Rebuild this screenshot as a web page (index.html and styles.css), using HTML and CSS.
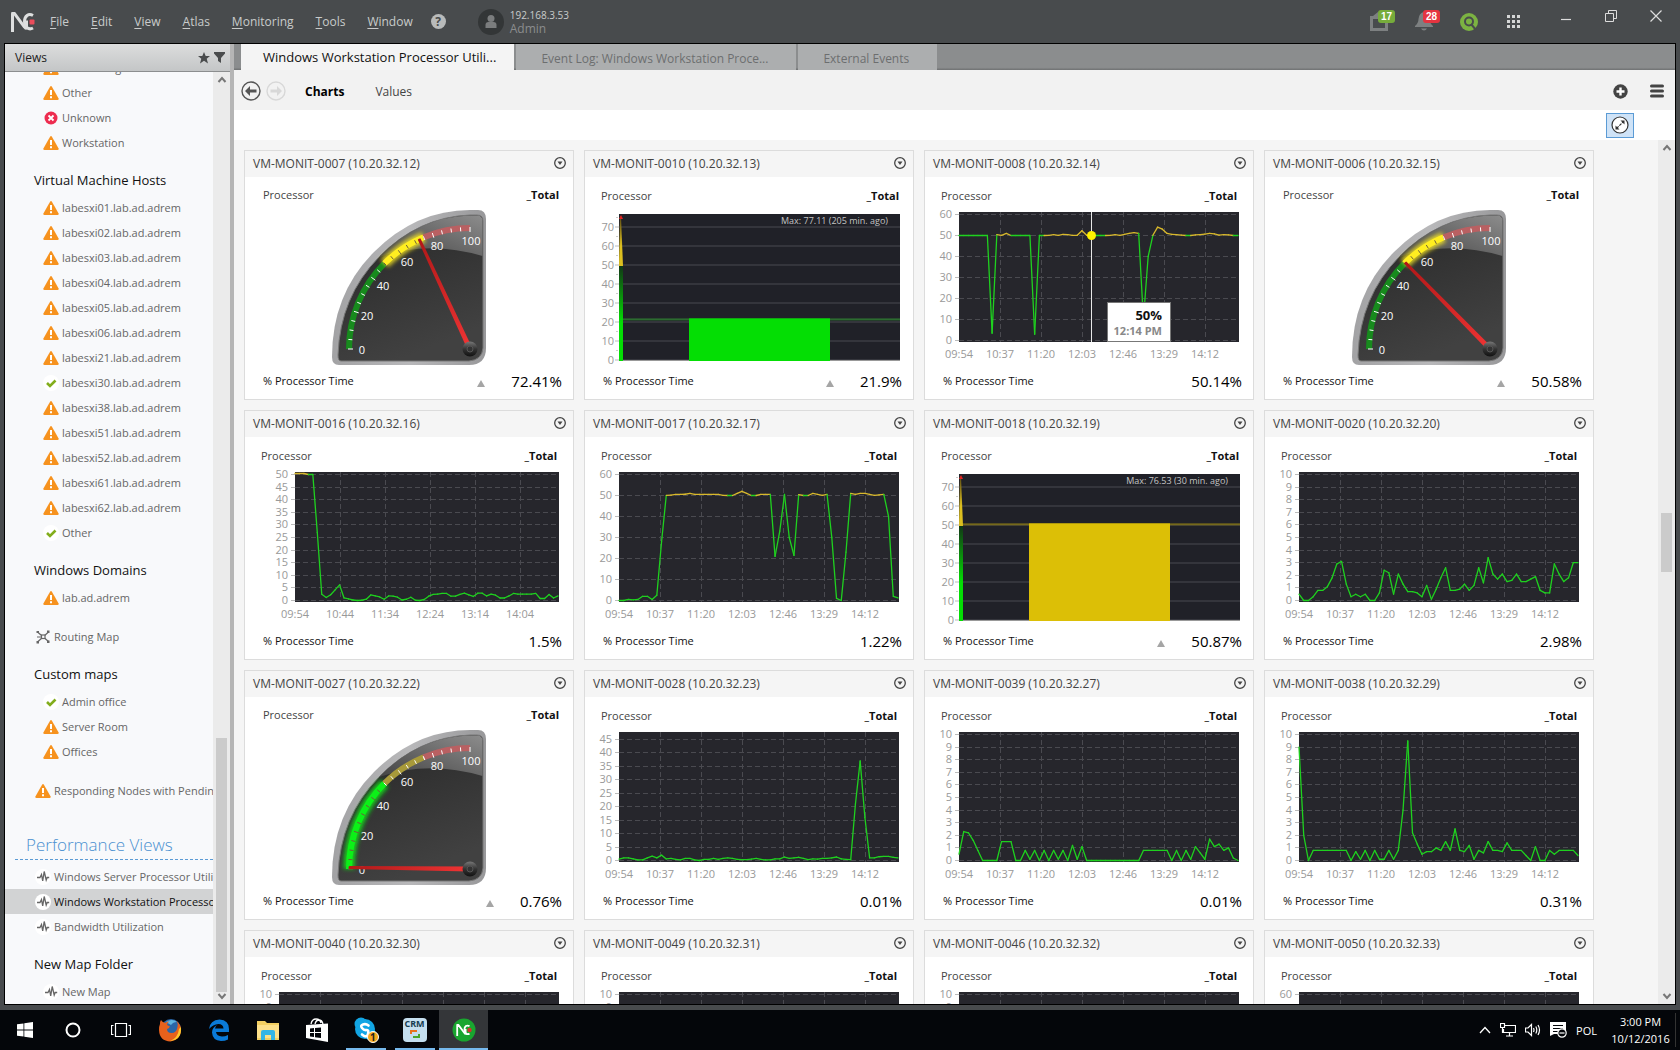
FILE: index.html
```html
<!DOCTYPE html>
<html lang="en">

<head>
    <meta name="viewport" content="width=device-width, initial-scale=1">
    <meta charset="utf-8">
    <title>Windows Workstation Processor Utilization</title>
    <link rel="stylesheet" href="styles.css">
</head>

<body>

    <!-- shared icons -->
    <svg class="defs" width="0" height="0" aria-hidden="true">
        <symbol id="i-warn" viewBox="0 0 16 16">
            <path d="M7.2 1.6Q8 .4 8.800 1.600L15.600 13.400Q16 15 14.500 15H1.500Q0 15 .4 13.400Z" fill="#f6921e"/>
            <path d="M7 5h2v5H7zM7 11.200h2v2H7z" fill="#fff"/>
        </symbol>
        <symbol id="i-error" viewBox="0 0 16 16">
            <circle cx="8" cy="8" r="6.500" fill="#ed2c4f"/>
            <path d="M5.500 5.500l5 5M10.500 5.500l-5 5" stroke="#fff" stroke-width="1.800"/>
        </symbol>
        <symbol id="i-ok" viewBox="0 0 16 16">
            <circle cx="8" cy="8" r="8" fill="#fff"/>
            <path d="M4 8l3 3 5.500-5.500" fill="none" stroke="#82ad1c" stroke-width="2.600"/>
        </symbol>
        <symbol id="i-pulse" viewBox="0 0 16 16">
            <circle cx="8" cy="8" r="8" fill="#fff"/>
            <path d="M2 8.500h3l1.500-3 1.200 6.500 1.500-9.500 2 8.500 1-2.500h2" fill="none" stroke="#666" stroke-width="1.300"/>
        </symbol>
        <symbol id="i-route" viewBox="0 0 16 16">
            <path d="M2.500 3l11 9.500M2.500 13L13.500 3M2 8h4" stroke="#666" stroke-width="1.200"/>
            <rect x="6.500" y="6" width="3.500" height="3.500" fill="#f8f9fb" stroke="#666" stroke-width="1.200"/>
            <path d="M1.500 2h2.500v2H1.500zM12 1.500h2.500v2.500H12zM1.500 12h2.500v2.500H1.500zM12 11.500h2.500v2.500H12z" fill="#666"/>
        </symbol>
        <symbol id="i-up" viewBox="0 0 10 10">
            <path d="M1.500 7L5 3l3.500 4" fill="none" stroke="#777" stroke-width="2"/>
        </symbol>
        <symbol id="i-nc" viewBox="0 0 24 20">
            <path d="M1.500 20V2Q1.500 0 3.500 1.500L13.500 15Q15.500 18 15.500 14V8.500" fill="none" stroke="currentColor" stroke-width="3"/>
            <path d="M22 3.500C17.500 1 13.500 4 13.500 9.500S17.500 18.500 22 16" fill="none" stroke="currentColor" stroke-width="3"/>
        </symbol>
    </svg>

    <header class="topbar">
        <svg class="logo" viewBox="0 0 24 20" aria-hidden="true">
            <use href="#i-nc"/>
            <rect x="18.500" y="7.500" width="5" height="5" rx="1" fill="#ea4c5b"/>
        </svg>
        <nav class="menu">
            <a href="#"><u>F</u>ile</a>
            <a href="#"><u>E</u>dit</a>
            <a href="#"><u>V</u>iew</a>
            <a href="#"><u>A</u>tlas</a>
            <a href="#"><u>M</u>onitoring</a>
            <a href="#"><u>T</u>ools</a>
            <a href="#"><u>W</u>indow</a>
        </nav>
        <button class="help" aria-label="Help">?</button>
        <div class="user">
            <svg width="26" height="26" viewBox="0 0 26 26" aria-hidden="true">
                <circle cx="13" cy="13" r="13" fill="#333637"/>
                <circle cx="13" cy="9.500" r="3.500" fill="#7b7d7e"/>
                <path d="M7.500 19v-3q0-3 3-3h5q3 0 3 3v3z" fill="#7b7d7e"/>
            </svg>
            <div class="user-text">
                <span>192.168.3.53</span>
                <span class="role">Admin</span>
            </div>
        </div>
        <div class="status">
            <button class="status-btn" aria-label="Tasks">
                <svg width="18" height="19" viewBox="0 0 18 19" aria-hidden="true">
                    <path d="M1.500 5.500h15v12h-15z" fill="none" stroke="#7d8081" stroke-width="3"/>
                    <path d="M3 4l5-4v4z" fill="#7d8081"/>
                </svg>
                <span class="badge green">17</span>
            </button>
            <button class="status-btn" aria-label="Alerts">
                <svg width="18" height="19" viewBox="0 0 18 19" aria-hidden="true">
                    <path d="M9 0q5 1 5.500 7 0 4 3.500 7v1H0v-1q3.500-3 3.500-7Q4 1 9 0zM6 16.500h6q-1 2-3 2t-3-2z" fill="#7d8081"/>
                </svg>
                <span class="badge red">28</span>
            </button>
            <button class="status-btn" aria-label="Search">
                <svg width="18" height="18" viewBox="0 0 18 18" aria-hidden="true">
                    <circle cx="9" cy="9" r="9" fill="#7cb342"/>
                    <circle cx="9" cy="8.500" r="4" fill="none" stroke="#484b4d" stroke-width="2"/>
                    <path d="M11 11l5 6" stroke="#484b4d" stroke-width="2"/>
                </svg>
            </button>
            <button class="status-btn" aria-label="Apps">
                <svg width="14" height="14" viewBox="0 0 14 14" aria-hidden="true">
                    <path d="M0 0h3v3H0zM5 0h3v3H5zM10 0h3v3h-3zM0 5h3v3H0zM5 5h3v3H5zM10 5h3v3h-3zM0 10h3v3H0zM5 10h3v3H5zM10 10h3v3h-3z" fill="#d5d6d6"/>
                </svg>
            </button>
        </div>
        <div class="window-btns">
            <button aria-label="Minimize"><svg width="12" height="12" viewBox="0 0 12 12"><path d="M1 9.500h10" stroke="#ddd" stroke-width="1.200"/></svg></button>
            <button aria-label="Restore"><svg width="12" height="12" viewBox="0 0 12 12"><path d="M.5 3.500h8v8h-8zM3.500 3V.5h8v8H9" fill="none" stroke="#ddd"/></svg></button>
            <button aria-label="Close"><svg width="12" height="12" viewBox="0 0 12 12"><path d="M.5.5l11 11M11.500.5l-11 11" stroke="#ddd" stroke-width="1.200"/></svg></button>
        </div>
    </header>

    <div class="frame">
        <aside class="sidebar">
            <div class="sidebar-head">
                <span>Views</span>
                <svg width="12" height="12" viewBox="0 0 12 12" aria-hidden="true"><path d="M6 0l1.700 4H12L8.700 6.800 10 11.500 6 8.800 2 11.500l1.300-4.700L0 4h4.300z" fill="#4a4c4d"/></svg>
                <svg width="11" height="11" viewBox="0 0 11 11" aria-hidden="true"><path d="M0 0h11v1.500L7 6v5L4 9V6L0 1.500z" fill="#4a4c4d"/></svg>
            </div>
            <div class="sidebar-body">
                <nav class="tree">
                    <a href="#" class="leaf"><svg><use href="#i-warn"/></svg>Networking</a>
                    <a href="#" class="leaf"><svg><use href="#i-warn"/></svg>Other</a>
                    <a href="#" class="leaf"><svg><use href="#i-error"/></svg>Unknown</a>
                    <a href="#" class="leaf"><svg><use href="#i-warn"/></svg>Workstation</a>
                    <h3>Virtual Machine Hosts</h3>
                    <a href="#" class="leaf"><svg><use href="#i-warn"/></svg>labesxi01.lab.ad.adrem</a>
                    <a href="#" class="leaf"><svg><use href="#i-warn"/></svg>labesxi02.lab.ad.adrem</a>
                    <a href="#" class="leaf"><svg><use href="#i-warn"/></svg>labesxi03.lab.ad.adrem</a>
                    <a href="#" class="leaf"><svg><use href="#i-warn"/></svg>labesxi04.lab.ad.adrem</a>
                    <a href="#" class="leaf"><svg><use href="#i-warn"/></svg>labesxi05.lab.ad.adrem</a>
                    <a href="#" class="leaf"><svg><use href="#i-warn"/></svg>labesxi06.lab.ad.adrem</a>
                    <a href="#" class="leaf"><svg><use href="#i-warn"/></svg>labesxi21.lab.ad.adrem</a>
                    <a href="#" class="leaf"><svg><use href="#i-ok"/></svg>labesxi30.lab.ad.adrem</a>
                    <a href="#" class="leaf"><svg><use href="#i-warn"/></svg>labesxi38.lab.ad.adrem</a>
                    <a href="#" class="leaf"><svg><use href="#i-warn"/></svg>labesxi51.lab.ad.adrem</a>
                    <a href="#" class="leaf"><svg><use href="#i-warn"/></svg>labesxi52.lab.ad.adrem</a>
                    <a href="#" class="leaf"><svg><use href="#i-warn"/></svg>labesxi61.lab.ad.adrem</a>
                    <a href="#" class="leaf"><svg><use href="#i-warn"/></svg>labesxi62.lab.ad.adrem</a>
                    <a href="#" class="leaf"><svg><use href="#i-ok"/></svg>Other</a>
                    <h3>Windows Domains</h3>
                    <a href="#" class="leaf"><svg><use href="#i-warn"/></svg>lab.ad.adrem</a>
                    <a href="#" class="spaced"><svg><use href="#i-route"/></svg>Routing Map</a>
                    <h3>Custom maps</h3>
                    <a href="#" class="leaf"><svg><use href="#i-ok"/></svg>Admin office</a>
                    <a href="#" class="leaf"><svg><use href="#i-warn"/></svg>Server Room</a>
                    <a href="#" class="leaf"><svg><use href="#i-warn"/></svg>Offices</a>
                    <a href="#" class="spaced"><svg><use href="#i-warn"/></svg>Responding Nodes with Pending</a>
                    <h2>Performance Views</h2>
                    <a href="#"><svg><use href="#i-pulse"/></svg>Windows Server Processor Utilization</a>
                    <a href="#" class="selected"><svg><use href="#i-pulse"/></svg>Windows Workstation Processor Utilization</a>
                    <a href="#"><svg><use href="#i-pulse"/></svg>Bandwidth Utilization</a>
                    <h3>New Map Folder</h3>
                    <a href="#" class="leaf"><svg><use href="#i-pulse"/></svg>New Map</a>
                </nav>
                <div class="scrollbar">
                    <svg><use href="#i-up"/></svg>
                    <div class="track"><div class="thumb tree-thumb"></div></div>
                    <svg class="down"><use href="#i-up"/></svg>
                </div>
            </div>
        </aside>

        <main class="main">
            <div class="tabs">
                <button class="tab active">Windows Workstation Processor Utili...</button>
                <button class="tab">Event Log: Windows Workstation Proce...</button>
                <button class="tab">External Events</button>
            </div>
            <div class="toolbar">
                <button aria-label="Back"><svg width="20" height="20" viewBox="0 0 20 20"><circle cx="10" cy="10" r="9" fill="none" stroke="#555" stroke-width="1.400"/><path d="M4 10l5-5v3.500h6.500v3H9V15z" fill="#555"/></svg></button>
                <button aria-label="Forward"><svg width="20" height="20" viewBox="0 0 20 20"><circle cx="10" cy="10" r="9" fill="none" stroke="#d8d8d8" stroke-width="1.400"/><path d="M16 10l-5-5v3.500H4.500v3H11V15z" fill="#d8d8d8"/></svg></button>
                <a href="#" class="current">Charts</a>
                <a href="#">Values</a>
                <div class="tools">
                    <button aria-label="Add"><svg width="15" height="15" viewBox="0 0 15 15"><circle cx="7.500" cy="7.500" r="7.200" fill="#444"/><path d="M7.500 3.500v8M3.500 7.500h8" stroke="#fff" stroke-width="2.400"/></svg></button>
                    <button aria-label="Menu"><svg width="14" height="14" viewBox="0 0 14 14"><path d="M1.500 2h11M1.500 7h11M1.500 12h11" stroke="#444" stroke-width="3" stroke-linecap="round"/></svg></button>
                </div>
            </div>
            <div class="subbar">
                <button class="toggle" aria-label="Fit"><svg width="18" height="18" viewBox="0 0 18 18"><circle cx="9" cy="9" r="8" fill="#fff" stroke="#333" stroke-width="1.200"/><path d="M5.500 12.500l7-7" stroke="#333" stroke-width="1.200" stroke-dasharray="3 1"/><path d="M9.500 4.500h4v4zM4.500 9.500v4h4z" fill="#333"/></svg></button>
            </div>
            <div class="content">
                <div class="cards" id="cards"></div>
                <div class="scrollbar">
                    <svg><use href="#i-up"/></svg>
                    <div class="track"><div class="thumb cards-thumb"></div></div>
                    <svg class="down"><use href="#i-up"/></svg>
                </div>
            </div>
        </main>
    </div>

    <footer class="taskbar">
        <button class="sys" aria-label="Start"><svg width="16" height="16" viewBox="0 0 16 16"><path d="M0 2.300L6.500 1.400v6.200H0zM7.300 1.300L16 0v7.600H7.300zM0 8.400h6.500v6.200L0 13.700zM7.300 8.400H16V16l-8.700-1.300z" fill="#fff"/></svg></button>
        <button class="sys" aria-label="Cortana"><svg width="16" height="16" viewBox="0 0 16 16"><circle cx="8" cy="8" r="6.500" fill="none" stroke="#fff" stroke-width="2"/></svg></button>
        <button class="sys" aria-label="Task view"><svg width="20" height="16" viewBox="0 0 20 16"><path d="M4.500 1.500h11v13h-11zM2.500 3.500h-2v9h2M17.500 3.500h2v9h-2" fill="none" stroke="#fff" stroke-width="1.200"/></svg></button>
        <button aria-label="Firefox"><svg width="24" height="24" viewBox="0 0 24 24"><circle cx="13" cy="11" r="10" fill="#2a66a8"/><path d="M8 4q6-4 11 0-4 0-6 3z" fill="#5fb4e0"/><path d="M3 2q1 2 4 3 2-2 4-1.500-2 1.500-2 3.500l3 1.500q-1 2-3 2.500 0 4 4.500 4 5 0 6-6 1-3-1-6 5 4 4.500 10-1 9.500-10.500 10.500Q1.500 23 1 12q0-4 1-6-.3-2 1-4z" fill="#e8611c"/><path d="M23 9q1 13-11 14 8-3 9-12z" fill="#ffc72b"/></svg></button>
        <button aria-label="Edge"><svg width="22" height="22" viewBox="0 0 22 22"><path d="M1 10Q2 1 11.500.5 21 1 21 10v3H8q.5 4 6 4.500 3 0 6-1.500v4.500q-3 1.500-7 1.500-8.500-.5-9-8.500 0-5 5-7.500-1.500 1-2 3.500h8.500q-.3-4.500-5-4.500Q5 5.500 1 10z" fill="#0a7ad8"/></svg></button>
        <button aria-label="File Explorer"><svg width="22" height="19" viewBox="0 0 22 19"><path d="M0 0h8l2 2h12v17H0z" fill="#f3cf62"/><path d="M0 4h22v13H0z" fill="#fde08a"/><path d="M4 19v-8q0-2 2-2h10q2 0 2 2v8h-4v-5H8v5z" fill="#35b5e5"/></svg></button>
        <button aria-label="Store"><svg width="22" height="24" viewBox="0 0 22 24"><path d="M0 7l22-1.500V24L0 20z" fill="#fff"/><path d="M5 6Q6 1 10 1t5 4M9 6q1-4 4-4t4 4" fill="none" stroke="#fff" stroke-width="1.300"/><path d="M4 10.500l4-.5v4H4zM9 10l6-.5V14H9zM4 15h4v4l-4-.5zM9 15h6v5l-6-.8z" fill="#04060a"/></svg></button>
        <button class="running" aria-label="Skype">
            <svg width="26" height="26" viewBox="0 0 26 26"><circle cx="8" cy="7" r="6.500" fill="#12a5e4"/><circle cx="12" cy="12" r="10" fill="#12a5e4"/><circle cx="17" cy="17" r="6" fill="#12a5e4"/><path d="M15.500 8.500Q13 6.500 10 7.500T9 11t4.500 2 1.500 4-6 .5" fill="none" stroke="#fff" stroke-width="2.600" stroke-linecap="round"/><circle cx="20" cy="20" r="5.500" fill="#f6a81c" stroke="#fff"/></svg>
            <span class="count">1</span>
        </button>
        <button class="running" aria-label="CRM">
            <span class="crm"><b>CRM</b><svg width="10" height="8" viewBox="0 0 10 8"><path d="M1 4V1h6" fill="none" stroke="#e8731f" stroke-width="2"/><path d="M9 4v3H3" fill="none" stroke="#48a72b" stroke-width="2"/></svg></span>
        </button>
        <button class="running focused" aria-label="NetCrunch">
            <svg width="24" height="24" viewBox="0 0 24 24"><circle cx="12" cy="12" r="11.500" fill="#19a52f"/><svg x="4" y="6" width="15" height="12" color="#fff"><use href="#i-nc"/></svg><circle cx="17.500" cy="12" r="2.200" fill="#d8322f"/></svg>
        </button>
        <div class="tray">
            <svg width="12" height="8" viewBox="0 0 12 8"><path d="M1 7l5-5.500L11 7" fill="none" stroke="#fff" stroke-width="1.300"/></svg>
            <svg width="16" height="14" viewBox="0 0 16 14"><path d="M5 2.500h10.500v7H3.500V6M9.500 10v3M6 13h7M.5.500h4v4h-4zM2.500 5v5" fill="none" stroke="#fff" stroke-width="1.200"/></svg>
            <svg width="16" height="14" viewBox="0 0 16 14"><path d="M.5 5v4h2.500l3.500 3.500v-11L3 5zM8.500 5q1 2 0 4M10.800 3.500q2 3.500 0 7M13 2q3 5 0 10" fill="none" stroke="#fff" stroke-width="1.200"/></svg>
            <svg width="17" height="16" viewBox="0 0 17 16"><path d="M0 0h16v12H4l-4 2z" fill="#fff"/><path d="M3 3.500h10M3 6.500h10M3 9.500h5" stroke="#04060a" stroke-width="1.200"/><circle cx="12" cy="11" r="4.200" fill="#04060a" stroke="#fff" stroke-width="1.200"/><path d="M9.500 11h5" stroke="#fff" stroke-width="1.200"/></svg>
            <span>POL</span>
            <div class="clock"><span>3:00 PM</span><span>10/12/2016</span></div>
        </div>
    </footer>

    <script src="charts.js"></script>
</body>

</html>
```
FILE: styles.css
```css
* {
    box-sizing: border-box;
}

body {
    margin: 0;
    height: 100vh;
    display: flex;
    flex-direction: column;
    overflow: hidden;
    background: #484b4d;
    font-family: "Open Sans", "Noto Sans", sans-serif;
    font-size: 11px;
    color: #444;
}

a {
    color: inherit;
    text-decoration: none;
}

button {
    font: inherit;
    color: inherit;
    background: none;
    border: none;
    padding: 0;
}

svg {
    display: block;
    flex: none;
}

.defs {
    position: absolute;
}

/* top bar */

.topbar {
    display: flex;
    align-items: center;
    height: 43px;
    flex: none;
    padding-left: 11px;
    color: #c9cbcb;
}

.logo {
    width: 24px;
    height: 20px;
    color: #dedfdf;
}

.menu {
    display: flex;
    gap: 22px;
    margin-left: 15px;
    font-size: 12px;
}

.menu u {
    text-underline-offset: 2px;
}

.help {
    width: 15px;
    height: 15px;
    margin-left: 18px;
    border-radius: 50%;
    background: #b9bbbb;
    color: #484b4d;
    font-size: 12px;
    font-weight: bold;
    line-height: 15px;
}

.user {
    display: flex;
    align-items: center;
    gap: 6px;
    margin-left: 32px;
}

.user-text {
    display: flex;
    flex-direction: column;
    font-size: 10px;
    line-height: 14px;
}

.role {
    font-size: 12px;
    color: #8b8d8e;
}

.status {
    display: flex;
    align-items: center;
    margin-left: auto;
}

.status-btn {
    position: relative;
    width: 45px;
    height: 26px;
    display: flex;
    align-items: center;
    justify-content: center;
}

.badge {
    position: absolute;
    top: 1px;
    left: 22px;
    width: 17px;
    border-radius: 3px;
    color: #fff;
    font: bold 10px/13px "Liberation Sans", sans-serif;
}

.green {
    background: #76ac3b;
}

.red {
    background: #e53440;
}

.window-btns {
    display: flex;
    gap: 33px;
    margin: 0 18px 12px 24px;
}

/* window */

.frame {
    flex: 1;
    min-height: 0;
    display: flex;
    margin: 0 4px 5px;
    border: 1px solid #000;
    background: #f5f5f5;
}

.sidebar {
    width: 229px;
    flex: none;
    display: flex;
    flex-direction: column;
    border-right: 4px solid #b5b5b5;
    background: #f8f9fb;
}

.sidebar-head {
    display: flex;
    align-items: center;
    gap: 4px;
    height: 28px;
    flex: none;
    padding: 0 5px 0 10px;
    border-bottom: 1px solid #8c8e8f;
    background: linear-gradient(#dcdddd, #c4c6c7);
    font-size: 12px;
    color: #222;
}

.sidebar-head span {
    flex: 1;
}

.sidebar-body {
    flex: 1;
    min-height: 0;
    display: flex;
}

/* the tree is scrolled down to its end */
.tree {
    flex: 1;
    min-width: 0;
    display: flex;
    flex-direction: column;
    justify-content: flex-end;
    overflow: hidden;
    color: #666;
}

.tree a {
    display: flex;
    align-items: center;
    gap: 3px;
    flex: none;
    height: 25px;
    padding-left: 30px;
    white-space: nowrap;
}

.tree a.leaf {
    padding-left: 38px;
}

.tree a.spaced {
    margin-top: 14px;
}

.tree a.selected {
    background: #d2d3d4;
    color: #111;
}

.tree svg {
    width: 16px;
    height: 16px;
}

.tree h3 {
    flex: none;
    margin: 12px 0 2px 29px;
    font-size: 13px;
    font-weight: normal;
    line-height: 26px;
    color: #111;
}

.tree h2 {
    flex: none;
    margin: 28px 0 4px 10px;
    padding-left: 11px;
    border-bottom: 1px dashed #5b9bd5;
    font-size: 17px;
    font-weight: 300;
    line-height: 28px;
    color: #4a90d0;
}

.scrollbar {
    width: 17px;
    flex: none;
    display: flex;
    flex-direction: column;
    align-items: center;
    padding: 3px 0;
    background: #ebebeb;
}

.scrollbar svg {
    width: 10px;
    height: 10px;
}

.scrollbar .down {
    transform: rotate(180deg);
}

.track {
    flex: 1;
    width: 11px;
}

.thumb {
    background: #cbcbcb;
}

.tree-thumb {
    height: 28%;
    margin-top: 653px;
}

.cards-thumb {
    height: 59px;
    margin-top: 360px;
}

/* main area */

.main {
    flex: 1;
    min-width: 0;
    display: flex;
    flex-direction: column;
}

.tabs {
    display: flex;
    gap: 2px;
    height: 26px;
    flex: none;
    padding-left: 7px;
    background: linear-gradient(#8b8d8e 90%, #6f7172);
}

.tab {
    padding: 2px 28px 0 25px;
    background: #acaeaf;
    color: #6c6e6f;
    font-size: 12px;
}

.tab.active {
    padding: 0 18px 0 22px;
    background: #f4f4f4;
    color: #111;
    font-size: 13px;
}

.toolbar {
    display: flex;
    align-items: center;
    height: 40px;
    flex: none;
    padding: 2px 11px 0 7px;
    background: #f2f2f2;
    font-size: 12px;
}

.toolbar > button {
    margin-right: 5px;
}

.toolbar > a {
    margin: 0 17px 0 14px;
}

.toolbar .current {
    color: #000;
    font-weight: bold;
}

.tools {
    display: flex;
    gap: 22px;
    margin-left: auto;
}

.subbar {
    display: flex;
    align-items: center;
    justify-content: flex-end;
    height: 30px;
    flex: none;
    padding-right: 41px;
    background: #fff;
}

.toggle {
    display: flex;
    align-items: center;
    justify-content: center;
    width: 28px;
    height: 25px;
    border: 1px solid #5b9bd5;
    background: #cfe3f7;
}

.content {
    flex: 1;
    min-height: 0;
    display: flex;
    background: #f5f5f5;
}

.cards {
    flex: 1;
    display: grid;
    grid-template-columns: repeat(auto-fill, 330px);
    grid-auto-rows: 250px;
    gap: 10px;
    padding: 10px;
    overflow: hidden;
}

.card {
    border: 1px solid #dcdcdc;
    background: #fff;
}

.card-head {
    display: flex;
    align-items: center;
    justify-content: space-between;
    height: 26px;
    padding: 0 7px 2px 8px;
    background: #f5f5f5;
}

.card-head h4 {
    margin: 0;
    font-size: 12px;
    font-weight: normal;
}

.labels {
    display: flex;
    justify-content: space-between;
    padding: 9px 16px 0;
    line-height: 20px;
}

.labels b {
    color: #111;
}

.gauge .labels {
    padding: 8px 14px 1px 18px;
}

.bars .labels {
    padding-right: 14px;
}

.card-foot {
    display: flex;
    align-items: center;
    padding: 0 11px 0 18px;
    line-height: 30px;
    color: #111;
}

.card-foot .trend {
    margin: 4px 26px 0 auto;
}

.card-foot .value {
    font-size: 15px;
    color: #000;
}

.card-foot .name + .value {
    margin-left: auto;
}

.chart text {
    font-size: 11px;
    fill: #999;
}

.chart .dial-text {
    fill: #fff;
}

.chart .max-text {
    font-size: 9px;
    fill: #c4c4c4;
}

.chart .tip-value {
    font-size: 13px;
    font-weight: bold;
    fill: #111;
}

.chart .tip-time {
    font-weight: bold;
    fill: #888;
}

/* task bar */

.taskbar {
    display: flex;
    height: 40px;
    flex: none;
    padding-left: 1px;
    background: #04060a;
    color: #fff;
}

.taskbar button {
    position: relative;
    display: flex;
    align-items: center;
    justify-content: center;
    width: 49px;
}

.taskbar .sys {
    width: 48px;
}

.running::after {
    content: "";
    position: absolute;
    bottom: 0;
    left: 5px;
    right: 4px;
    height: 2px;
    background: #76b9ed;
}

.taskbar .focused {
    background: #343639;
}

.focused::after {
    left: 0;
    right: 0;
}

.count {
    position: absolute;
    left: 29px;
    top: 20px;
    font-size: 10px;
    font-weight: bold;
    color: #222;
}

.crm {
    display: flex;
    flex-direction: column;
    align-items: center;
    width: 24px;
    height: 24px;
    border-radius: 4px;
    background: #c5dff0;
    color: #173d50;
    font-size: 9px;
    line-height: 12px;
}

.tray {
    display: flex;
    align-items: center;
    gap: 9px;
    margin-left: auto;
    padding-right: 4px;
}

.clock {
    display: flex;
    flex-direction: column;
    align-items: center;
    width: 70px;
    border-right: 1px solid #333;
    line-height: 17px;
}
```
FILE: charts.js
```javascript
var GREEN = '#1fd11f';
var YELLOW = '#d9b92c';

var T43 = ['09:54', '10:37', '11:20', '12:03', '12:46', '13:29', '14:12'];
var T50 = ['09:54', '10:44', '11:34', '12:24', '13:14', '14:04'];

// one sample each 5 minutes
var s0008 = [50, 50, 50, 50, 50, 50, 50, 3.5, 50.4, 50.1, 51, 50, 50, 50, 50, 50, 3, 50, 50, 50.1, 50.4, 50.1, 50.5, 50.4, 50.1, 50.1, 52.3, 50.1, 50, 50, 50, 50, 50.1, 50.4, 50.1, 50.5, 51, 51.4, 51, 10, 40, 50.1, 54, 53, 51, 50.5, 50.4, 50.2, 50, 50, 50.3, 50.4, 50.7, 51, 50.8, 50.2, 50.4, 50.3, 50, 50];
var s0016 = [50.4, 50.4, 50.4, 50, 50, 27, 2.5, 1.2, 2.3, 4.2, 6.2, 1, .6, .2, 0, .1, .5, 2.2, 1.8, 1.4, .5, 1.8, 1.7, 1.3, .2, .5, 1.3, .1, 0, .4, 1.7, 2.4, 2.5, 2.8, 2.8, 1.7, 1.7, 2.4, 2.9, 2.2, 1.6, 2.9, 2.9, 1.8, 2.5, 2.1, 1, 1, 1.8, 2.8, 2.5, 2.5, 2.5, 2.5, 2.8, .8, .8, 2.4, 1, 1.8];
var s0017 = [0, 0, .5, .3, .5, 2, 2, .5, 2.5, 28, 50.1, 50.2, 50.5, 50.5, 50.6, 51, 50.5, 50.5, 50.5, 50.5, 50.5, 50.5, 50.1, 50, 50, 51, 52, 51, 50, 50, 50.5, 50.5, 50.5, 21, 33, 50.5, 30, 21.5, 50.4, 50, 50, 51, 50.5, 50.1, 50.5, 30, 1, 0, 23, 51, 50.5, 51, 51, 50.5, 50.1, 50.3, 50.5, 40, 2, 1.2];
var s0020 = [.5, 0, 0, .3, .8, .8, 1.1, 1.8, 2.9, 3.1, 1.3, .3, .5, .3, .5, 0, 0, .6, 2.4, 2.2, .5, 2.1, 1.3, .7, .7, .6, .3, 1.2, .1, .9, 1.8, 2.6, .8, .8, .9, 1.3, .8, 1.2, 2.6, 1.4, 3.4, 2.1, 1.7, 2.1, 1.5, 1.6, 2.1, 1.5, 1.5, 1.7, 1.9, .8, .6, .6, 2.9, 2.1, 1.5, 1.8, 3, 3];
var s0028 = [.5, 1, 1, .6, .2, .2, 1, 1.6, 1, 2, .6, .8, .4, .2, .8, .8, .2, 0, .4, .4, .8, .4, .8, 1, .8, .4, .3, .3, .5, .8, .4, .2, .2, .6, .6, 1.3, .8, 1, 1.2, .8, .3, .6, .5, .8, .8, 1, 1.3, .6, .4, .3, 21, 37, 16, 1, 1, 1.4, 1.5, 1.5, 1.2, 1];
var s0039 = [.5, 2.3, 2.2, 1.6, .8, 0, 0, 0, 0, 1.5, 1.5, 1.5, 0, 0, .8, .1, .8, 0, .8, 0, .8, .1, .8, 0, 1.2, .1, 1.1, 0, 0, 0, 0, 0, 0, 0, 0, 0, 0, 0, 0, .8, .8, .8, .8, .8, .8, 0, .8, 0, .8, .1, 1.1, .6, .1, 1.7, 1.1, 1.3, .8, 1, .2, 0];
var s0038 = [9, 2, 0, .8, .8, .8, .8, .8, .8, .8, .8, 0, .7, .1, .8, 0, .8, .1, .1, .8, .1, .8, 4, 9.5, 2.2, 1.3, .5, .7, .7, 1, .8, 1.5, .8, 2.5, .8, .7, 1.2, .1, .8, .6, 1.5, .8, .8, .7, 1.4, .8, .8, .8, .4, 0, 1.1, 0, 0, .8, .5, .8, .8, .8, .8, .4];

var cards = [
    { name: 'VM-MONIT-0007 (10.20.32.12)', type: 'gauge', value: 72.41, up: true },
    { name: 'VM-MONIT-0010 (10.20.32.13)', type: 'bars', value: 21.9, up: true, max: 'Max: 77.11 (205 min. ago)', color: '#04de04', line: '#2c6b30' },
    { name: 'VM-MONIT-0008 (10.20.32.14)', type: 'line', value: 50.14, max: 60, step: 10, data: s0008, cursor: 28 },
    { name: 'VM-MONIT-0006 (10.20.32.15)', type: 'gauge', value: 50.58, up: true },
    { name: 'VM-MONIT-0016 (10.20.32.16)', type: 'line', value: 1.5, max: 50, step: 5, data: s0016, left: 50, times: T50, gap: 45 },
    { name: 'VM-MONIT-0017 (10.20.32.17)', type: 'line', value: 1.22, max: 60, step: 10, data: s0017 },
    { name: 'VM-MONIT-0018 (10.20.32.19)', type: 'bars', value: 50.87, up: true, max: 'Max: 76.53 (30 min. ago)', color: '#dcbf06', line: '#75691c' },
    { name: 'VM-MONIT-0020 (10.20.32.20)', type: 'line', value: 2.98, max: 10, step: 1, data: s0020 },
    { name: 'VM-MONIT-0027 (10.20.32.22)', type: 'gauge', value: 0.76, up: true },
    { name: 'VM-MONIT-0028 (10.20.32.23)', type: 'line', value: 0.01, max: 45, step: 5, data: s0028, top: 13 },
    { name: 'VM-MONIT-0039 (10.20.32.27)', type: 'line', value: 0.01, max: 10, step: 1, data: s0039 },
    { name: 'VM-MONIT-0038 (10.20.32.29)', type: 'line', value: 0.31, max: 10, step: 1, data: s0038 },
    { name: 'VM-MONIT-0040 (10.20.32.30)', type: 'line', value: 0.5, max: 10, step: 1, data: s0039 },
    { name: 'VM-MONIT-0049 (10.20.32.31)', type: 'line', value: 0.5, max: 10, step: 1, data: s0039 },
    { name: 'VM-MONIT-0046 (10.20.32.32)', type: 'line', value: 0.5, max: 10, step: 1, data: s0039 },
    { name: 'VM-MONIT-0050 (10.20.32.33)', type: 'line', value: 0.5, max: 60, step: 10, data: s0017 }
];

function rect(x, y, w, h, fill, extra) {
    return '<rect x="' + x + '" y="' + y + '" width="' + w + '" height="' + h + '" fill="' + fill + '" ' + (extra || '') + '/>';
}

function line(x1, y1, x2, y2, stroke, width, extra) {
    return '<line x1="' + x1 + '" y1="' + y1 + '" x2="' + x2 + '" y2="' + y2 + '" stroke="' + stroke + '" stroke-width="' + (width || 1) + '" ' + (extra || '') + '/>';
}

function text(x, y, str, anchor, cls) {
    return '<text x="' + x + '" y="' + y + '" text-anchor="' + anchor + '" class="' + (cls || '') + '">' + str + '</text>';
}

function lineChart(c) {
    var left = c.left || 34;
    var right = 314;
    var top = c.top || 8;
    var zero = 134;
    var times = c.times || T43;
    var gap = c.gap || 41;
    var out = rect(left, 6, right - left, 130, '#26262c');

    for (var v = 0; v <= c.max; v += c.step) {
        var y = Math.round(zero - v / c.max * (zero - top)) + 0.5;
        out += line(left - 4, y, left, y, '#bbb');
        out += line(left, y, right, y, '#4a4a50', 1, 'stroke-dasharray="5 3"');
        out += text(left - 7, y + 3.5, v, 'end');
    }
    for (var t = 0; t < times.length; t++) {
        var x = left + t * gap;
        if (t) out += line(x + 0.5, 6, x + 0.5, 136, '#4a4a50', 1, 'stroke-dasharray="5 3"');
        out += text(x, 152, times[t], 'middle');
    }

    var dx = (right - left - 1) / (c.data.length - 1);
    var ys = c.data.map(function(d) { return zero + 0.5 - d / c.max * (zero - top); });
    for (var i = 1; i < ys.length; i++) {
        var high = c.data[i - 1] + c.data[i] > 100.05 && Math.min(c.data[i - 1], c.data[i]) >= 50;
        out += line(left + (i - 1) * dx, ys[i - 1], left + i * dx, ys[i], high ? YELLOW : GREEN, 1.3, 'stroke-linecap="round"');
    }

    if (c.cursor) {
        var cx = Math.round(left + c.cursor * dx) + 0.5;
        out += line(cx, 6, cx, 136, '#e8e8e8');
        out += '<circle cx="' + cx + '" cy="' + ys[c.cursor] + '" r="4.5" fill="#fff200"/>';
        out += rect(182.5, 96.5, 63, 39, '#fff', 'stroke="#777"');
        out += text(237, 114, '50%', 'end', 'tip-value');
        out += text(237, 129, '12:14 PM', 'end', 'tip-time');
    }
    return out;
}

function barChart(c) {
    var zero = 154;
    var y = zero - c.value * 1.9;
    var out = rect(34, 8, 281, 147, '#202128');
    for (var v = 0; v <= 70; v += 10) {
        var gy = zero - v * 1.9;
        out += rect(34, gy - 1, 281, 2, '#34353c');
        out += line(30, gy, 34, gy, '#bbb');
        out += line(31, gy - 9.5, 33, gy - 9.5, '#ccc');
        out += text(29, gy + 4, v, 'end');
    }
    out += rect(34, zero, 281, 1, '#999');
    out += rect(34, y, 281, 2, c.line);
    // level marker at the left edge
    out += rect(34, 60, 4, 95, 'url(#fade-green)');
    out += '<path d="M35 10h1l2 50h-4z" fill="url(#fade-yellow)"/>';
    out += '<path d="M34 13l2-4 2 4z" fill="#e02020"/>';
    out += rect(104, y, 141, zero + 1 - y, c.color);
    out += text(303, 18, c.max, 'end', 'max-text');
    return out;
}

function polar(v, r) {
    var a = Math.PI * (1 - v / 200);
    return [138 + r * Math.cos(a), 139 - r * Math.sin(a)];
}

function band(from, to, color, width, extra) {
    var a = polar(from, 121);
    var b = polar(to, 121);
    return '<path d="M' + a + 'A121 121 0 0 1 ' + b + '" fill="none" stroke="' + color + '" stroke-width="' + width + '" ' + (extra || '') + '/>';
}

function gauge(c) {
    var zones = [
        [0, 50, '#178a1d', '#0cf018'],
        [50, 75, '#a89a3a', '#ffee20'],
        [75, 100, '#b96062', '#ff3030']
    ];
    var labels = [[30, 0], [35, 20], [51, 40], [75, 60], [105, 80], [139, 100]];
    var labelY = [144, 110, 80, 56, 40, 35];
    var out = '<svg x="87" y="4" width="155" height="156">';
    out += '<path d="M7 155Q0 155 0 147Q0 84 42 42T138 0H146Q154 0 154 9V138Q154 155 137 155Z" fill="url(#rim)"/>';
    out += '<path d="M9 151Q6 151 6 145Q8 87 47 47T138 5H145Q151 5 151 11V138Q150 150 137 151Z" fill="url(#face)" stroke="#777"/>';
    out += '<path d="M47 47Q86 7 138 5.500H145Q150.500 5.500 150.500 11V46Q96 30 47 47Z" fill="url(#sheen)"/>';
    zones.forEach(function(z) {
        var on = c.value >= z[0] && c.value < z[1];
        if (on) out += band(z[0], z[1], z[3], 11, 'filter="url(#glow)" opacity="0.8"');
        out += band(z[0], z[1], on ? z[3] : z[2], 6);
        for (var v = z[0]; v <= z[1]; v += 5) {
            var a = polar(v, v % 20 ? 118 : 117);
            var b = polar(v, 122);
            out += line(a[0], a[1], b[0], b[1], on ? '#6d5f3a' : '#fff');
        }
    });
    labels.forEach(function(l, i) {
        out += text(l[0], labelY[i], l[1], 'middle', 'dial-text');
    });
    out += '<g transform="rotate(' + (c.value * 0.9) + ' 138 139)"><path d="M17 137.500Q16 139 17 140.500L138 141.500V136.500Z" fill="url(#needle)"/></g>';
    out += '<circle cx="138" cy="139" r="7.500" fill="url(#hub)"/><circle cx="138" cy="139" r="3" fill="#333" stroke="#555"/>';
    return out + '</svg>';
}

var draw = { line: lineChart, bars: barChart, gauge: gauge };

var defs = '<svg class="defs" width="0" height="0"><defs>' +
    '<linearGradient id="rim" x1="0" y1="0" x2="1" y2="0"><stop offset="0" stop-color="#a2a2a4"/><stop offset=".5" stop-color="#b8b8ba"/><stop offset="1" stop-color="#98989a"/></linearGradient>' +
    '<linearGradient id="face" x1="0" y1="0" x2=".4" y2="1"><stop offset="0" stop-color="#262626"/><stop offset="1" stop-color="#414141"/></linearGradient>' +
    '<linearGradient id="sheen" x1="0" y1="1" x2="1" y2="0"><stop offset="0" stop-color="#444"/><stop offset="1" stop-color="#8c8c8c"/></linearGradient>' +
    '<linearGradient id="needle"><stop offset="0" stop-color="#b01818"/><stop offset="1" stop-color="#f03434"/></linearGradient>' +
    '<linearGradient id="hub" x1="0" y1="0" x2="0" y2="1"><stop offset="0" stop-color="#777"/><stop offset=".5" stop-color="#333"/><stop offset="1" stop-color="#111"/></linearGradient>' +
    '<linearGradient id="fade-green" x1="0" y1="0" x2="0" y2="1"><stop offset="0" stop-color="#123816"/><stop offset=".6" stop-color="#04de04"/></linearGradient>' +
    '<linearGradient id="fade-yellow" x1="0" y1="0" x2="0" y2="1"><stop offset="0" stop-color="#5a4a14"/><stop offset=".6" stop-color="#dcbf20"/></linearGradient>' +
    '<filter id="glow" x="-30%" y="-30%" width="160%" height="160%"><feGaussianBlur stdDeviation="2"/></filter>' +
    '</defs></svg>';

var html = defs;
cards.forEach(function(c) {
    html += '<section class="card ' + c.type + '">' +
        '<div class="card-head"><h4>' + c.name + '</h4>' +
        '<button aria-label="Options"><svg width="12" height="12" viewBox="0 0 12 12"><circle cx="6" cy="6" r="5.300" fill="none" stroke="#444" stroke-width="1.300"/><path d="M3.500 4.500h5L6 8z" fill="#444"/></svg></button></div>' +
        '<div class="labels"><span>Processor</span><b>_Total</b></div>' +
        '<svg class="chart" width="328" height="160">' + draw[c.type](c) + '</svg>' +
        '<div class="card-foot"><span class="name">% Processor Time</span>' +
        (c.up ? '<svg class="trend" width="8" height="7" viewBox="0 0 8 7"><path d="M4 0l4 7H0z" fill="#a5a5a5"/></svg>' : '') +
        '<span class="value">' + c.value + '%</span></div>' +
        '</section>';
});
document.getElementById('cards').innerHTML = html;
```
